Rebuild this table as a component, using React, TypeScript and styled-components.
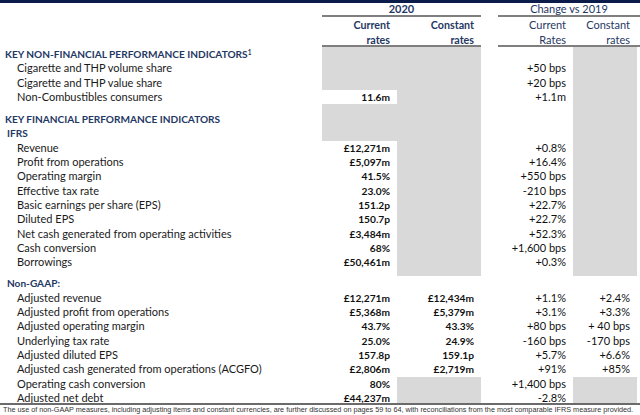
import React from "react";
import styled, { createGlobalStyle } from "styled-components";

const COLS = "322px 75px 84px 17px 75px 64px 3px";
const NAVY = "#1f3864";
const SHADE = "#d9d9d9";
const RULE = "#7f7f7f";

const GlobalStyle = createGlobalStyle`
  html, body { margin: 0; padding: 0; background: #ffffff; }
  body { font-family: Lato, "Liberation Sans", Arial, sans-serif; }
`;

const Page = styled.div`
  width: 640px;
  height: 415px;
  overflow: hidden;
  background: #ffffff;
  display: flex;
  flex-direction: column;
  font-size: 11px;
  color: #1a1a1a;
`;

const TopBar = styled.div`
  flex: none;
  height: 3px;
  background: #0c1c4a;
`;

const HeadGrid = styled.div`
  display: grid;
  grid-template-columns: ${COLS};
`;

const GroupHead = styled.div<{ $span: string; $bold?: boolean }>`
  grid-column: ${(p) => p.$span};
  height: 12px;
  line-height: 12px;
  text-align: center;
  color: ${NAVY};
  font-size: 11px;
  font-weight: ${(p) => (p.$bold ? 700 : 400)};
  border-bottom: 2px solid ${RULE};
`;

const HeadBlank = styled.div<{ $ruled?: boolean }>`
  box-sizing: border-box;
  height: 30px;
  border-bottom: ${(p) => (p.$ruled ? `2px solid ${RULE}` : "none")};
`;

const SubHead = styled.div<{ $bold?: boolean }>`
  box-sizing: border-box;
  height: 30px;
  padding: 1px 7px 0 0;
  line-height: 14.5px;
  text-align: right;
  color: ${NAVY};
  font-size: ${(p) => (p.$bold ? 10.7 : 11)}px;
  font-weight: ${(p) => (p.$bold ? 700 : 400)};
  border-bottom: 2px solid ${RULE};
`;

const Body = styled.div`
  display: flex;
  flex-direction: column;
`;

const Row = styled.div<{ $h: number }>`
  display: grid;
  grid-template-columns: ${COLS};
  height: ${(p) => p.$h}px;
  flex: none;
`;

const Label = styled.div<{ $kind: "heading" | "sub" | "item" | "blank" }>`
  line-height: 14.3px;
  white-space: nowrap;
  padding-left: ${(p) => (p.$kind === "heading" ? 5 : p.$kind === "sub" ? 7 : 17)}px;
  color: ${(p) => (p.$kind === "item" ? "#1a1a1a" : NAVY)};
  font-size: ${(p) => (p.$kind === "item" ? 11 : 10.1)}px;
  font-weight: ${(p) => (p.$kind === "item" ? 400 : 700)};
`;

const Cell = styled.div<{ $shade?: boolean; $bold?: boolean }>`
  background: ${(p) => (p.$shade ? SHADE : "transparent")};
  line-height: 14.3px;
  text-align: right;
  padding-right: 7px;
  white-space: nowrap;
  color: #111111;
  font-size: ${(p) => (p.$bold ? 10.2 : 11)}px;
  font-weight: ${(p) => (p.$bold ? 700 : 400)};
`;

const Gap = styled.div``;

const Sup = styled.span`
  font-size: 6.5px;
  line-height: 0;
  vertical-align: 3px;
`;

const FooterRule = styled.div`
  flex: none;
  height: 2px;
  background: #6b6b6b;
`;

const FooterText = styled.div`
  padding-left: 3px;
  font-size: 7.25px;
  line-height: 10px;
  color: #333333;
  white-space: nowrap;
  font-family: "Liberation Sans", Arial, sans-serif;
`;

type Kind = "heading" | "sub" | "item" | "blank";
type RowData = {
  label?: React.ReactNode;
  kind: Kind;
  v?: [string, string, string, string];
  shade: [boolean, boolean, boolean];
  h?: number;
};

const E: [string, string, string, string] = ["", "", "", ""];
const ALL: [boolean, boolean, boolean] = [true, true, true];
const RIGHT: [boolean, boolean, boolean] = [false, true, true];
const NONE: [boolean, boolean, boolean] = [false, false, false];

const rows: RowData[] = [
  { kind: "heading", label: <>KEY NON-FINANCIAL PERFORMANCE INDICATORS<Sup>1</Sup></>, shade: ALL },
  { kind: "item", label: "Cigarette and THP volume share", v: ["", "", "+50 bps", ""], shade: ALL },
  { kind: "item", label: "Cigarette and THP value share", v: ["", "", "+20 bps", ""], shade: ALL },
  { kind: "item", label: "Non-Combustibles consumers", v: ["11.6m", "", "+1.1m", ""], shade: RIGHT },
  { kind: "blank", shade: ALL, h: 8 },
  { kind: "heading", label: "KEY FINANCIAL PERFORMANCE INDICATORS", shade: ALL },
  { kind: "sub", label: "IFRS", shade: ALL },
  { kind: "item", label: "Revenue", v: ["£12,271m", "", "+0.8%", ""], shade: RIGHT },
  { kind: "item", label: "Profit from operations", v: ["£5,097m", "", "+16.4%", ""], shade: RIGHT },
  { kind: "item", label: "Operating margin", v: ["41.5%", "", "+550 bps", ""], shade: RIGHT },
  { kind: "item", label: "Effective tax rate", v: ["23.0%", "", "-210 bps", ""], shade: RIGHT },
  { kind: "item", label: "Basic earnings per share (EPS)", v: ["151.2p", "", "+22.7%", ""], shade: RIGHT },
  { kind: "item", label: "Diluted EPS", v: ["150.7p", "", "+22.7%", ""], shade: RIGHT },
  { kind: "item", label: "Net cash generated from operating activities", v: ["£3,484m", "", "+52.3%", ""], shade: RIGHT },
  { kind: "item", label: "Cash conversion", v: ["68%", "", "+1,600 bps", ""], shade: RIGHT },
  { kind: "item", label: "Borrowings", v: ["£50,461m", "", "+0.3%", ""], shade: RIGHT },
  { kind: "blank", shade: RIGHT, h: 7 },
  { kind: "sub", label: "Non-GAAP:", shade: NONE },
  { kind: "item", label: "Adjusted revenue", v: ["£12,271m", "£12,434m", "+1.1%", "+2.4%"], shade: NONE },
  { kind: "item", label: "Adjusted profit from operations", v: ["£5,368m", "£5,379m", "+3.1%", "+3.3%"], shade: NONE },
  { kind: "item", label: "Adjusted operating margin", v: ["43.7%", "43.3%", "+80 bps", "+ 40 bps"], shade: NONE },
  { kind: "item", label: "Underlying tax rate", v: ["25.0%", "24.9%", "-160 bps", "-170 bps"], shade: NONE },
  { kind: "item", label: "Adjusted diluted EPS", v: ["157.8p", "159.1p", "+5.7%", "+6.6%"], shade: NONE },
  { kind: "item", label: "Adjusted cash generated from operations (ACGFO)", v: ["£2,806m", "£2,719m", "+91%", "+85%"], shade: NONE },
  { kind: "item", label: "Operating cash conversion", v: ["80%", "", "+1,400 bps", ""], shade: RIGHT },
  { kind: "item", label: "Adjusted net debt", v: ["£44,237m", "", "-2.8%", ""], shade: RIGHT, h: 12 },
];

export default function App() {
  return (
    <>
      <GlobalStyle />
      <Page>
        <TopBar />
        <HeadGrid>
          <Gap />
          <GroupHead $span="2 / 4" $bold>2020</GroupHead>
          <Gap />
          <GroupHead $span="5 / 8">Change vs 2019</GroupHead>

          <Gap />
          <SubHead $bold>Current<br />rates</SubHead>
          <SubHead $bold>Constant<br />rates</SubHead>
          <Gap />
          <SubHead>Current<br />Rates</SubHead>
          <SubHead>Constant<br />rates</SubHead>
          <HeadBlank $ruled />
        </HeadGrid>
        <Body>
          {rows.map((r, i) => {
            const v = r.v ?? E;
            return (
              <Row key={i} $h={r.h ?? 14.3}>
                <Label $kind={r.kind}>{r.label}</Label>
                <Cell $shade={r.shade[0]} $bold>{v[0]}</Cell>
                <Cell $shade={r.shade[1]} $bold>{v[1]}</Cell>
                <Gap />
                <Cell>{v[2]}</Cell>
                <Cell $shade={r.shade[2]}>{v[3]}</Cell>
                <Gap />
              </Row>
            );
          })}
        </Body>
        <FooterRule />
        <FooterText>
          The use of non-GAAP measures, including adjusting items and constant currencies, are further discussed on pages 59 to 64, with reconciliations from the most comparable IFRS measure provided.
        </FooterText>
      </Page>
    </>
  );
}
